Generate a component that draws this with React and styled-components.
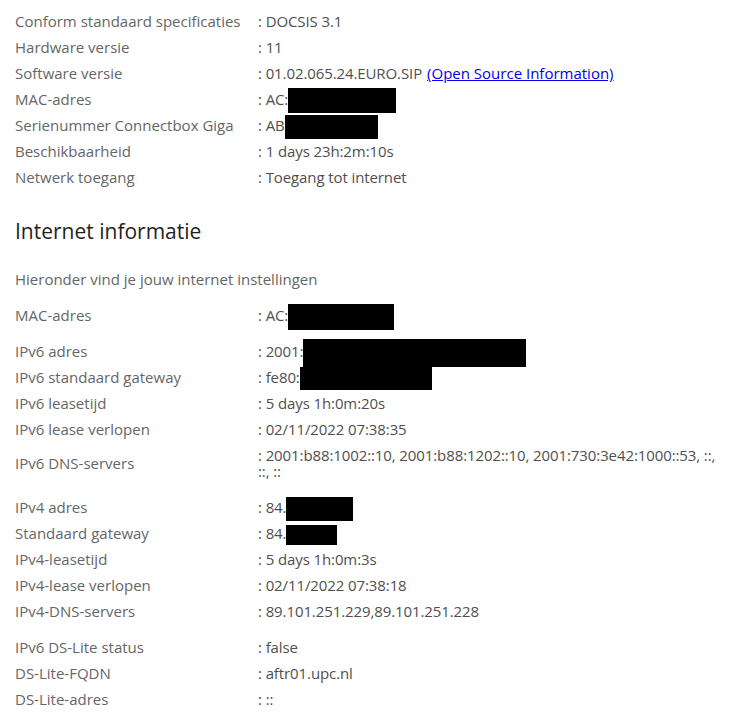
import React from "react";
import styled, { createGlobalStyle } from "styled-components";

const Global = createGlobalStyle`
  html, body { margin: 0; padding: 0; background: #fff; }
  body { font-family: "Open Sans", "Noto Sans", sans-serif; }
`;

const Page = styled.div`
  padding: 8px 8px 20px 15px;
  width: 732px;
  box-sizing: border-box;
`;

const Table = styled.div`
  display: grid;
  grid-template-columns: 243px 1fr;
`;

const Label = styled.div`
  grid-column: 1;
  display: flex;
  align-items: center;
  padding: 5px 0;
  margin-top: ${(p) => (p.$gap ? "10px" : "0")};
  font-size: 15px;
  line-height: 16px;
  color: #666;
  font-weight: 400;
  white-space: nowrap;
`;

const Value = styled.div`
  grid-column: 2;
  padding: 5px 0;
  margin-top: ${(p) => (p.$gap ? "10px" : "0")};
  font-size: 15px;
  line-height: 16px;
  color: #4f4f4f;
  font-weight: 500;
  letter-spacing: -0.1px;
`;

const Redact = styled.span`
  display: inline-block;
  background: #000;
  vertical-align: middle;
  width: ${(p) => p.$w}px;
  height: ${(p) => p.$h}px;
  margin: -8px 0;
`;

const Link = styled.a`
  color: #0000ee;
  font-weight: 400;
  letter-spacing: 0;
  text-decoration: underline;
  margin-left: 5px;
`;

const Heading = styled.h2`
  margin: 26px 0 20px 0;
  font-size: 21px;
  line-height: 30px;
  font-weight: 400;
  color: #1f1f1f;
`;

const Intro = styled.p`
  margin: 0 0 10px 0;
  padding: 5px 0;
  font-size: 15px;
  line-height: 16px;
  color: #666;
`;

const Row = ({ label, gap, children }) => (
  <>
    <Label $gap={gap}>{label}</Label>
    <Value $gap={gap}>
      {typeof children === "string" ? `: ${children}` : <>: {children}</>}
    </Value>
  </>
);

export default function App() {
  return (
    <>
      <Global />
      <Page>
        <Table>
          <Row label="Conform standaard specificaties">DOCSIS 3.1</Row>
          <Row label="Hardware versie">11</Row>
          <Row label="Software versie">
            01.02.065.24.EURO.SIP
            <Link href="#">(Open Source Information)</Link>
          </Row>
          <Row label="MAC-adres">
            AC:<Redact $w={108} $h={25} />
          </Row>
          <Row label="Serienummer Connectbox Giga">
            AB<Redact $w={93} $h={24} />
          </Row>
          <Row label="Beschikbaarheid">1 days 23h:2m:10s</Row>
          <Row label="Netwerk toegang">Toegang tot internet</Row>
        </Table>

        <Heading>Internet informatie</Heading>
        <Intro>Hieronder vind je jouw internet instellingen</Intro>

        <Table>
          <Row label="MAC-adres">
            AC:<Redact $w={106} $h={26} />
          </Row>
          <Row label="IPv6 adres" gap>
            2001:<Redact $w={223} $h={28} />
          </Row>
          <Row label="IPv6 standaard gateway">
            fe80:<Redact $w={132} $h={23} />
          </Row>
          <Row label="IPv6 leasetijd">5 days 1h:0m:20s</Row>
          <Row label="IPv6 lease verlopen">02/11/2022 07:38:35</Row>
          <Row label="IPv6 DNS-servers">
            {"2001:b88:1002::10, 2001:b88:1202::10, 2001:730:3e42:1000::53, ::, ::, ::"}
          </Row>
          <Row label="IPv4 adres" gap>
            84.<Redact $w={67} $h={24} />
          </Row>
          <Row label="Standaard gateway">
            84.<Redact $w={51} $h={20} />
          </Row>
          <Row label="IPv4-leasetijd">5 days 1h:0m:3s</Row>
          <Row label="IPv4-lease verlopen">02/11/2022 07:38:18</Row>
          <Row label="IPv4-DNS-servers">89.101.251.229,89.101.251.228</Row>
          <Row label="IPv6 DS-Lite status" gap>false</Row>
          <Row label="DS-Lite-FQDN">aftr01.upc.nl</Row>
          <Row label="DS-Lite-adres">::</Row>
        </Table>
      </Page>
    </>
  );
}
